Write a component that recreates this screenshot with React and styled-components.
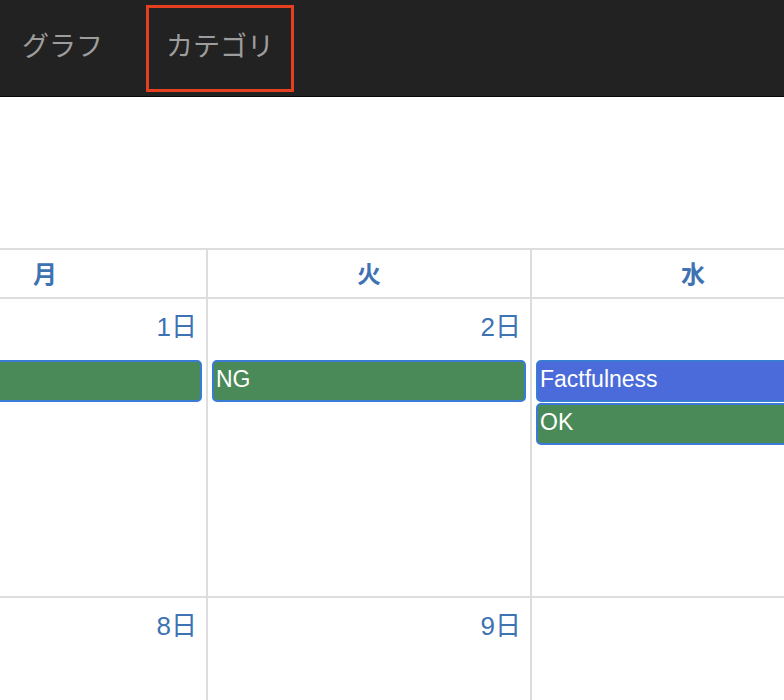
import React from "react";
import styled, { createGlobalStyle } from "styled-components";

const Global = createGlobalStyle`
  html, body { margin: 0; padding: 0; background: #fff; overflow: hidden; }
  body { font-family: "Liberation Sans", "Noto Sans CJK JP", sans-serif; }
`;

const Navbar = styled.nav`
  height: 96px;
  background: #222;
  border-bottom: 1px solid #080808;
  display: flex;
  align-items: flex-start;
  padding-left: 2px;
  gap: 23px;
`;

const NavItem = styled.a`
  box-sizing: border-box;
  height: 87px;
  margin-top: 5px;
  padding: 0 17px 8px;
  display: flex;
  align-items: center;
  font-family: "Noto Sans CJK JP", sans-serif;
  font-size: 27px;
  color: #9d9d9d;
  text-decoration: none;
  border: 3px solid ${(p) => (p.$marked ? "#e4401f" : "transparent")};
`;

const Toolbar = styled.div`
  height: 151px;
`;

const Calendar = styled.div`
  margin-left: -116px;
  border-top: 2px solid #ddd;
`;

const Row = styled.div`
  display: grid;
  grid-template-columns: repeat(7, 324px);
`;

const HeadCell = styled.div`
  box-sizing: border-box;
  height: 49px;
  border-right: 2px solid #ddd;
  border-bottom: 2px solid #ddd;
  display: flex;
  align-items: center;
  justify-content: center;
  font-family: "Noto Sans CJK JP", sans-serif;
  font-weight: 700;
  font-size: 24px;
  color: #3d72b3;
  padding-bottom: 2px;
`;

const DayCell = styled.div`
  box-sizing: border-box;
  height: ${(p) => p.$h}px;
  border-right: 2px solid #ddd;
  border-bottom: 2px solid #ddd;
  display: flex;
  flex-direction: column;
`;

const DayNumber = styled.div`
  height: 61px;
  box-sizing: border-box;
  padding: 13px 9px 0 0;
  text-align: right;
  font-size: 26px;
  line-height: 30px;
  color: #3d72b3;
  font-family: "Liberation Sans", "Noto Sans CJK JP", sans-serif;
`;

const Event = styled.div`
  box-sizing: border-box;
  height: 42px;
  margin: 0 4px 1px;
  border: 2px solid #3a7bd5;
  border-radius: 5px;
  background: ${(p) => p.$color};
  color: #fff;
  font-size: 23px;
  line-height: 35px;
  padding-left: 2px;
  white-space: nowrap;
  overflow: hidden;
`;

const GREEN = "#4a8a58";
const BLUE = "#4a6bd9";

const days = ["月", "火", "水", "木", "金", "土", "日"];

const weeks = [
  {
    h: 299,
    cells: [
      { n: 1, events: [{ t: "OK", c: GREEN }] },
      { n: 2, events: [{ t: "NG", c: GREEN }] },
      { n: 3, events: [{ t: "Factfulness", c: BLUE }, { t: "OK", c: GREEN }] },
      { n: 4, events: [] },
      { n: 5, events: [] },
      { n: 6, events: [] },
      { n: 7, events: [] },
    ],
  },
  {
    h: 299,
    cells: [8, 9, 10, 11, 12, 13, 14].map((n) => ({ n, events: [] })),
  },
];

export default function App() {
  return (
    <>
      <Global />
      <Navbar>
        <NavItem>グラフ</NavItem>
        <NavItem $marked>カテゴリ</NavItem>
      </Navbar>
      <Toolbar />
      <Calendar>
        <Row>
          {days.map((d) => (
            <HeadCell key={d}>{d}</HeadCell>
          ))}
        </Row>
        {weeks.map((w, i) => (
          <Row key={i}>
            {w.cells.map((c) => (
              <DayCell key={c.n} $h={w.h}>
                <DayNumber>{c.n}日</DayNumber>
                {c.events.map((e, j) => (
                  <Event key={j} $color={e.c}>
                    {e.t}
                  </Event>
                ))}
              </DayCell>
            ))}
          </Row>
        ))}
      </Calendar>
    </>
  );
}
